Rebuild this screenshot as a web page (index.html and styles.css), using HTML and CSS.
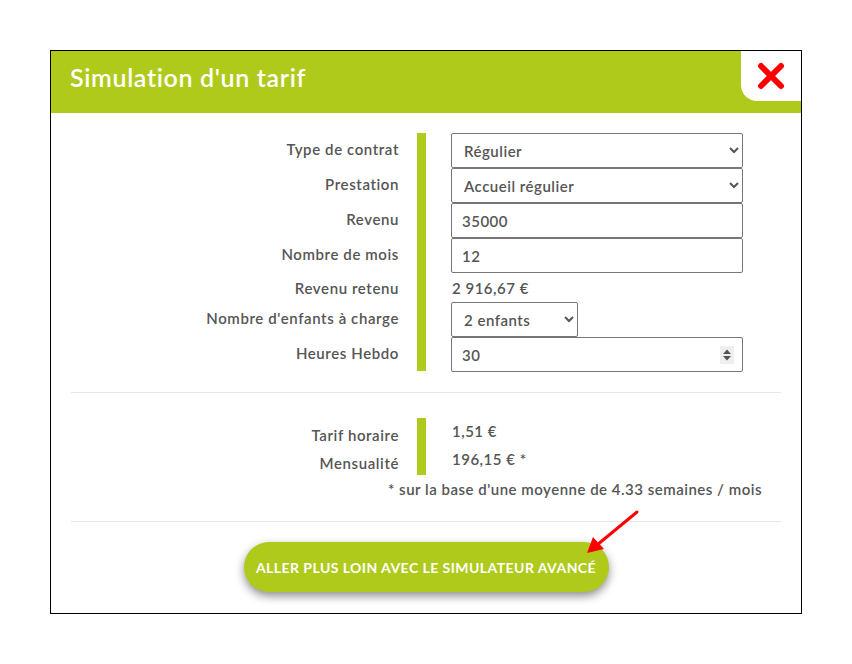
FILE: index.html
```html
<!DOCTYPE html>
<html lang="fr">
<head>
    <meta charset="UTF-8">
    <meta name="viewport" content="width=device-width, initial-scale=1.0">
    <title>Simulation d'un tarif</title>
    <link rel="stylesheet" href="styles.css">
</head>
<body>
    <div class="modal">
        <div class="modal-header">
            <h2>Simulation d'un tarif</h2>
            <button class="close" aria-label="Fermer">
                <svg width="28" height="28" viewBox="0 0 28 28">
                    <path d="M4 4 L24 24 M24 4 L4 24" stroke="#f00" stroke-width="6" stroke-linecap="round"/>
                </svg>
            </button>
        </div>

        <div class="form-grid">
            <div class="bar bar-form"></div>

            <label class="lbl r1" for="contrat">Type de contrat</label>
            <select id="contrat" class="field r1">
                <option>Régulier</option>
            </select>

            <label class="lbl r2" for="prestation">Prestation</label>
            <select id="prestation" class="field r2">
                <option>Accueil régulier</option>
            </select>

            <label class="lbl r3" for="revenu">Revenu</label>
            <input id="revenu" class="field r3" type="text" value="35000">

            <label class="lbl r4" for="mois">Nombre de mois</label>
            <input id="mois" class="field r4" type="text" value="12">

            <span class="lbl r5 short">Revenu retenu</span>
            <span class="value r5 short">2 916,67 €</span>

            <label class="lbl r6" for="enfants">Nombre d'enfants à charge</label>
            <select id="enfants" class="field small r6">
                <option>2 enfants</option>
            </select>

            <label class="lbl r7" for="heures">Heures Hebdo</label>
            <div class="field number r7">
                <input id="heures" type="text" value="30">
                <svg class="spin" width="14" height="18" viewBox="0 0 14 18">
                    <rect width="14" height="18" fill="#efefef"/>
                    <path d="M3 8 L7 3.5 L11 8 Z M3 10 L7 14.5 L11 10 Z" fill="#555"/>
                </svg>
            </div>
        </div>

        <hr class="sep">

        <div class="result-grid">
            <div class="bar bar-result"></div>
            <span class="lbl res-lbl q1">Tarif horaire</span>
            <span class="value res-val q1">1,51 €</span>
            <span class="lbl res-lbl q2">Mensualité</span>
            <span class="value res-val q2">196,15 € *</span>
        </div>
        <p class="note">* sur la base d'une moyenne de 4.33 semaines / mois</p>

        <hr class="sep sep-bottom">

        <div class="actions">
            <button class="advanced">ALLER PLUS LOIN AVEC LE SIMULATEUR AVANCÉ</button>
        </div>

        <svg class="arrow" width="60" height="50" viewBox="0 0 60 50">
            <path d="M54 3 L14 36" stroke="#f00" stroke-width="3" stroke-linecap="round"/>
            <path d="M4 44 L10 28 L21 40 Z" fill="#f00"/>
        </svg>
    </div>
</body>
</html>
```

FILE: styles.css
```css
body {
    margin: 0;
    padding: 50px;
    background: #fff;
    font-family: Lato, "Open Sans", sans-serif;
    color: #555;
}
.modal {
    position: relative;
    width: 750px;
    height: 562px;
    border: 1px solid #000;
    background: #fff;
}
.modal-header {
    display: flex;
    justify-content: space-between;
    align-items: flex-start;
    height: 62px;
    background: #afca1b;
}
.modal-header h2 {
    margin: 0;
    padding: 11px 0 0 19px;
    color: #fff;
    font-size: 25px;
    font-weight: 600;
    letter-spacing: 0.65px;
}
.close {
    display: flex;
    align-items: center;
    justify-content: center;
    width: 60px;
    height: 50px;
    padding: 0;
    border: none;
    background: #fff;
    border-bottom-left-radius: 16px;
    cursor: pointer;
}

.form-grid {
    display: grid;
    grid-template-columns: 348px 18px 9px 25px 292px;
    grid-template-rows: 35px 35px 35px 35px 29px 35px 35px;
    margin-top: 20px;
}
.bar {
    grid-column: 3;
    grid-row: 1 / -1;
    background: #afca1b;
}
.bar-form {
    margin-bottom: 1px;
}
.lbl {
    grid-column: 1;
    align-self: center;
    text-align: right;
    font-size: 15px;
    font-weight: 600;
    letter-spacing: 0.6px;
    color: #555;
    padding-bottom: 3px;
}
.field, .value {
    grid-column: 5;
}
.r1 { grid-row: 1; }
.r2 { grid-row: 2; }
.r3 { grid-row: 3; }
.r4 { grid-row: 4; }
.r5 { grid-row: 5; }
.r6 { grid-row: 6; }
.r7 { grid-row: 7; }
.field {
    box-sizing: border-box;
    height: 35px;
    margin: 0;
    padding: 0 10px;
    border: 1px solid #767676;
    border-radius: 2px;
    background: #fff;
    font-family: inherit;
    font-size: 15px;
    font-weight: 600;
    letter-spacing: 0.5px;
    color: #555;
}
select.field {
    padding-left: 8px;
}
.field.small {
    width: 127px;
}
.number {
    display: flex;
    align-items: center;
    justify-content: space-between;
    padding-right: 8px;
}
.number input {
    width: 200px;
    border: none;
    outline: none;
    padding: 0;
    font: inherit;
    letter-spacing: inherit;
    color: inherit;
}
.value {
    align-self: center;
    font-size: 15px;
    font-weight: 600;
    letter-spacing: 0.5px;
    padding-left: 1px;
}
.short {
    padding-bottom: 0;
}

.sep {
    margin: 20px 20px 0;
    border: none;
    border-top: 1px solid #e6e6e6;
}
.sep-bottom {
    margin-top: 23px;
}

.result-grid {
    display: grid;
    grid-template-columns: 348px 18px 9px 25px 292px;
    grid-template-rows: 29px 28px;
    margin-top: 25px;
}
.q1 { grid-row: 1; }
.q2 { grid-row: 2; }
.res-lbl {
    padding-bottom: 0;
    padding-top: 4px;
}
.res-val {
    padding-bottom: 4px;
}
.note {
    margin: 5px 39px 0 0;
    text-align: right;
    font-size: 15px;
    font-weight: 600;
    letter-spacing: 0.5px;
}

.actions {
    display: flex;
    justify-content: center;
    margin-top: 20px;
}
.advanced {
    width: 365px;
    height: 50px;
    border: none;
    border-radius: 25px;
    background: #afca1b;
    color: #fff;
    font-family: inherit;
    font-size: 14px;
    font-weight: 700;
    letter-spacing: 0.45px;
    box-shadow: 0 4px 10px rgba(0, 0, 0, 0.45);
    cursor: pointer;
}
.arrow {
    position: absolute;
    left: 532px;
    top: 458px;
}
```
